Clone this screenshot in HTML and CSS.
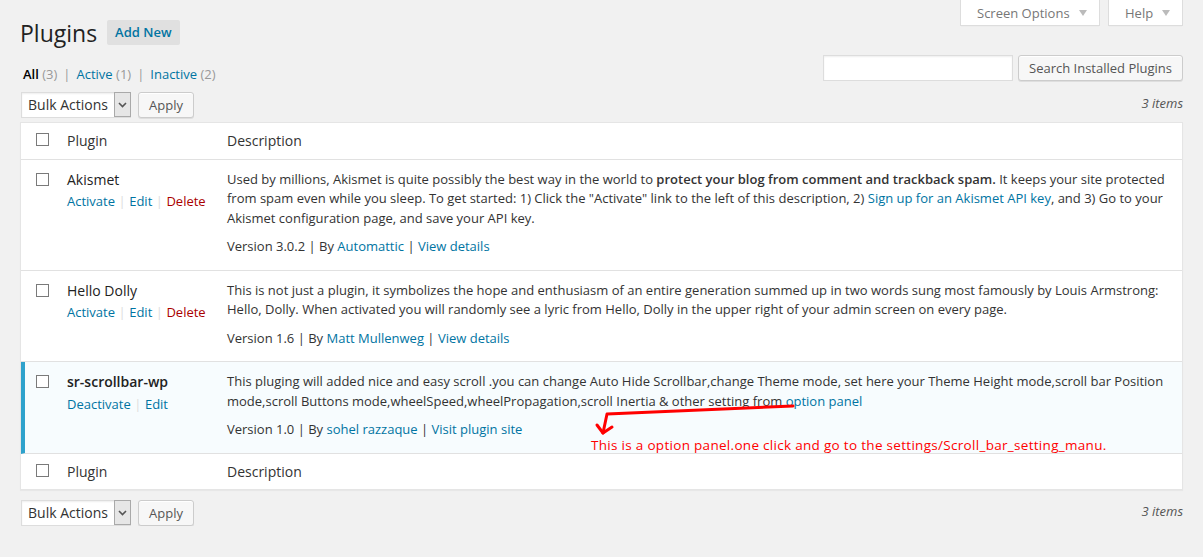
FILE: index.html
```html
<!DOCTYPE html>
<html>
<head>
<meta charset="utf-8">
<title>Plugins</title>
<link rel="stylesheet" href="styles.css">
</head>
<body>
<div class="wrap">
  <div class="top">
    <div class="title-row">
      <h1 class="page-title">Plugins</h1>
      <a class="add-new" href="#">Add New</a>
    </div>
    <div class="screen-tabs">
      <div class="tab tab-screen">Screen Options<span class="tri"></span></div>
      <div class="tab tab-help">Help<span class="tri"></span></div>
    </div>
  </div>

  <div class="filter-row">
    <ul class="subsubsub">
      <li><span class="current">All</span> <span class="cnt">(3)</span><span class="sep">|</span></li>
      <li><a href="#">Active</a> <span class="cnt">(1)</span><span class="sep">|</span></li>
      <li><a href="#">Inactive</a> <span class="cnt">(2)</span></li>
    </ul>
    <div class="search">
      <div class="search-input"></div>
      <button class="btn">Search Installed Plugins</button>
    </div>
  </div>

  <div class="tablenav">
    <div class="bulk">
      <div class="select"><span class="sel-text">Bulk Actions</span><span class="sel-arrow"><svg width="9" height="6" viewBox="0 0 9 6"><path d="M1 1 L4.5 4.5 L8 1" fill="none" stroke="#555" stroke-width="1.6"/></svg></span></div>
      <button class="btn">Apply</button>
    </div>
    <div class="count">3 items</div>
  </div>

  <table class="plugins">
    <colgroup><col class="c-check"><col class="c-name"><col></colgroup>
    <thead>
      <tr><th class="check"><span class="cb"></span></th><th>Plugin</th><th>Description</th></tr>
    </thead>
    <tbody>
      <tr>
        <th class="check"><span class="cb"></span></th>
        <td class="name">
          <div class="pname">Akismet</div>
          <div class="row-actions"><a href="#">Activate</a><span class="rsep">|</span><a href="#">Edit</a><span class="rsep">|</span><a href="#" class="delete">Delete</a></div>
        </td>
        <td class="desc">
          <p>Used by millions, Akismet is quite possibly the best way in the world to <strong>protect your blog from comment and trackback spam.</strong> It keeps your site protected from spam even while you sleep. To get started: 1) Click the "Activate" link to the left of this description, 2) <a href="#">Sign up for an Akismet API key</a>, and 3) Go to your Akismet configuration page, and save your API key.</p>
          <div class="ver">Version 3.0.2 | By <a href="#">Automattic</a> | <a href="#">View details</a></div>
        </td>
      </tr>
      <tr>
        <th class="check"><span class="cb"></span></th>
        <td class="name">
          <div class="pname">Hello Dolly</div>
          <div class="row-actions"><a href="#">Activate</a><span class="rsep">|</span><a href="#">Edit</a><span class="rsep">|</span><a href="#" class="delete">Delete</a></div>
        </td>
        <td class="desc">
          <p>This is not just a plugin, it symbolizes the hope and enthusiasm of an entire generation summed up in two words sung most famously by Louis Armstrong: Hello, Dolly. When activated you will randomly see a lyric from Hello, Dolly in the upper right of your admin screen on every page.</p>
          <div class="ver">Version 1.6 | By <a href="#">Matt Mullenweg</a> | <a href="#">View details</a></div>
        </td>
      </tr>
      <tr class="active">
        <th class="check"><span class="cb"></span></th>
        <td class="name">
          <div class="pname strong">sr-scrollbar-wp</div>
          <div class="row-actions"><a href="#">Deactivate</a><span class="rsep">|</span><a href="#">Edit</a></div>
        </td>
        <td class="desc">
          <p>This pluging will added nice and easy scroll .you can change Auto Hide Scrollbar,change Theme mode, set here your Theme Height mode,scroll bar Position mode,scroll Buttons mode,wheelSpeed,wheelPropagation,scroll Inertia &amp; other setting from <a href="#">option panel</a></p>
          <div class="ver">Version 1.0 | By <a href="#">sohel razzaque</a> | <a href="#">Visit plugin site</a></div>
        </td>
      </tr>
    </tbody>
    <tfoot>
      <tr><th class="check"><span class="cb"></span></th><th>Plugin</th><th>Description</th></tr>
    </tfoot>
  </table>

  <div class="tablenav bottom">
    <div class="bulk">
      <div class="select"><span class="sel-text">Bulk Actions</span><span class="sel-arrow"><svg width="9" height="6" viewBox="0 0 9 6"><path d="M1 1 L4.5 4.5 L8 1" fill="none" stroke="#555" stroke-width="1.6"/></svg></span></div>
      <button class="btn">Apply</button>
    </div>
    <div class="count">3 items</div>
  </div>
</div>

<div class="annotation">
  <svg class="arrow" width="230" height="45" viewBox="0 0 230 45">
    <path d="M213 11 L27 19 L23 38" fill="none" stroke="#f00" stroke-width="3" stroke-linecap="round" stroke-linejoin="round"/>
    <path d="M17 30 L23 38 L32 32" fill="none" stroke="#f00" stroke-width="3" stroke-linecap="round" stroke-linejoin="round"/>
  </svg>
  <div class="note">This is a option panel.one click and go to the settings/Scroll_bar_setting_manu.</div>
</div>
</body>
</html>
```

FILE: styles.css
```css
* { box-sizing: border-box; }

body {
  margin: 0;
  background: #f1f1f1;
  font-family: "Open Sans", "Liberation Sans", sans-serif;
  font-size: 13px;
  color: #444;
  position: relative;
}

a { color: #0074a2; text-decoration: none; }

.wrap { margin: 0 20px; }

/* header */
.top {
  display: flex;
  justify-content: space-between;
  align-items: flex-start;
}
.title-row {
  display: flex;
  align-items: flex-start;
  margin-top: 19px;
}
.page-title {
  margin: 0;
  font-size: 23px;
  font-weight: 400;
  line-height: 29px;
  color: #222;
}
.add-new {
  margin-left: 10px;
  margin-top: 1px;
  background: #e0e0e0;
  color: #0074a2;
  font-weight: 600;
  font-size: 13px;
  line-height: 25px;
  padding: 0 8px;
  border-radius: 2px;
}
.screen-tabs { display: flex; gap: 8px; }
.tab {
  height: 26px;
  padding: 0 0 0 16px;
  background: #fff;
  border: 1px solid #ddd;
  border-top: 0;
  color: #777;
  display: flex;
  align-items: center;
  box-shadow: 0 1px 1px -1px rgba(0,0,0,.1);
}
.tab-screen { width: 140px; }
.tab-help { width: 75px; }
.tri {
  width: 0;
  height: 0;
  border-left: 4px solid transparent;
  border-right: 4px solid transparent;
  border-top: 6px solid #bbb;
  margin-left: 9px;
}

/* filters + search */
.filter-row {
  display: flex;
  justify-content: space-between;
  margin-top: 7px;
  height: 26px;
}
.subsubsub {
  list-style: none;
  margin: 10px 0 0 3px;
  padding: 0;
  display: flex;
  line-height: 19px;
  color: #666;
}
.subsubsub .current { color: #000; font-weight: 600; }
.subsubsub .cnt { color: #999; }
.subsubsub .sep { color: #999; margin: 0 6px; }
.search { display: flex; gap: 5px; }
.search-input {
  width: 190px;
  height: 26px;
  background: #fff;
  border: 1px solid #ddd;
  box-shadow: inset 0 1px 2px rgba(0,0,0,.07);
}

.btn {
  height: 26px;
  padding: 0 10px;
  border: 1px solid #ccc;
  border-radius: 3px;
  background: #f7f7f7;
  color: #555;
  font-family: "Open Sans", sans-serif;
  font-size: 13px;
  line-height: 24px;
  box-shadow: inset 0 1px 0 #fff, 0 1px 0 rgba(0,0,0,.08);
}

/* tablenav */
.tablenav {
  display: flex;
  justify-content: space-between;
  align-items: flex-start;
  margin-top: 11px;
  height: 26px;
}
.tablenav.bottom { margin-top: 10px; }
.bulk { display: flex; gap: 7px; }
.select {
  margin-left: 1px;
  width: 110px;
  height: 26px;
  display: flex;
  align-items: stretch;
  background: #fff;
  border: 1px solid #ddd;
  box-shadow: inset 0 1px 2px rgba(0,0,0,.07);
  font-size: 14px;
  color: #333;
}
.sel-text { flex: 1; padding-left: 6px; line-height: 24px; }
.sel-arrow {
  width: 17px;
  margin: -1px -1px 0 0;
  height: 25px;
  background: #e6e6e6;
  border: 1px solid #a9a9a9;
  display: flex;
  align-items: center;
  justify-content: center;
}
.count {
  font-style: italic;
  color: #555;
  padding-top: 2px;
  line-height: 19.5px;
}
.tablenav.bottom .count { padding-top: 2px; }

/* table */
.plugins {
  margin-top: 4px;
  width: 100%;
  table-layout: fixed;
  border-collapse: separate;
  border-spacing: 0;
  background: #fff;
  border: 1px solid #e5e5e5;
  box-shadow: 0 1px 1px rgba(0,0,0,.04);
}
.c-check { width: 36px; }
.c-name { width: 160px; }

.plugins th, .plugins td {
  text-align: left;
  vertical-align: top;
  font-weight: 400;
}
.plugins thead th, .plugins tfoot th {
  padding: 8px 10px;
  font-size: 14px;
  line-height: 19.6px;
  color: #333;
}
.plugins thead th { border-bottom: 1px solid #e1e1e1; }
.plugins th.check { padding: 10px 0 0 15px; }
.plugins tbody th.check { padding: 13px 0 0 15px; }
.plugins tbody tr.active th.check {
  border-left: 4px solid #2ea2cc;
  padding-left: 11px;
}
.cb {
  display: block;
  width: 13px;
  height: 13px;
  border: 1px solid #7a7a7a;
  background: #fff;
}

.plugins tbody th, .plugins tbody td {
  border-bottom: 1px solid #e1e1e1;
}
.plugins tbody td { padding: 10px 10px 13px; }
.plugins tr.active th, .plugins tr.active td { background: #f7fcfe; }

.pname {
  font-size: 14px;
  line-height: 19.5px;
  color: #222;
}
.pname.strong { font-weight: 600; }
.row-actions {
  padding-top: 3px;
  line-height: 19.5px;
  font-size: 13px;
}
.rsep { color: #ddd; margin: 0 3.5px; }
.row-actions .delete { color: #a00; }

.desc { color: #333; line-height: 19.5px; }
.desc p { margin: 0 0 8px; }
.desc strong { font-weight: 600; }
.ver { color: #333; padding-top: 1px; }

/* annotation overlay */
.annotation {
  position: absolute;
  left: 0;
  top: 0;
  pointer-events: none;
}
.arrow {
  position: absolute;
  left: 580px;
  top: 395px;
}
.note {
  position: absolute;
  left: 591px;
  top: 436px;
  white-space: nowrap;
  color: #f00;
  font-family: "Open Sans", sans-serif;
  font-size: 13.5px;
  letter-spacing: 0.3px;
  line-height: 18px;
}
```
